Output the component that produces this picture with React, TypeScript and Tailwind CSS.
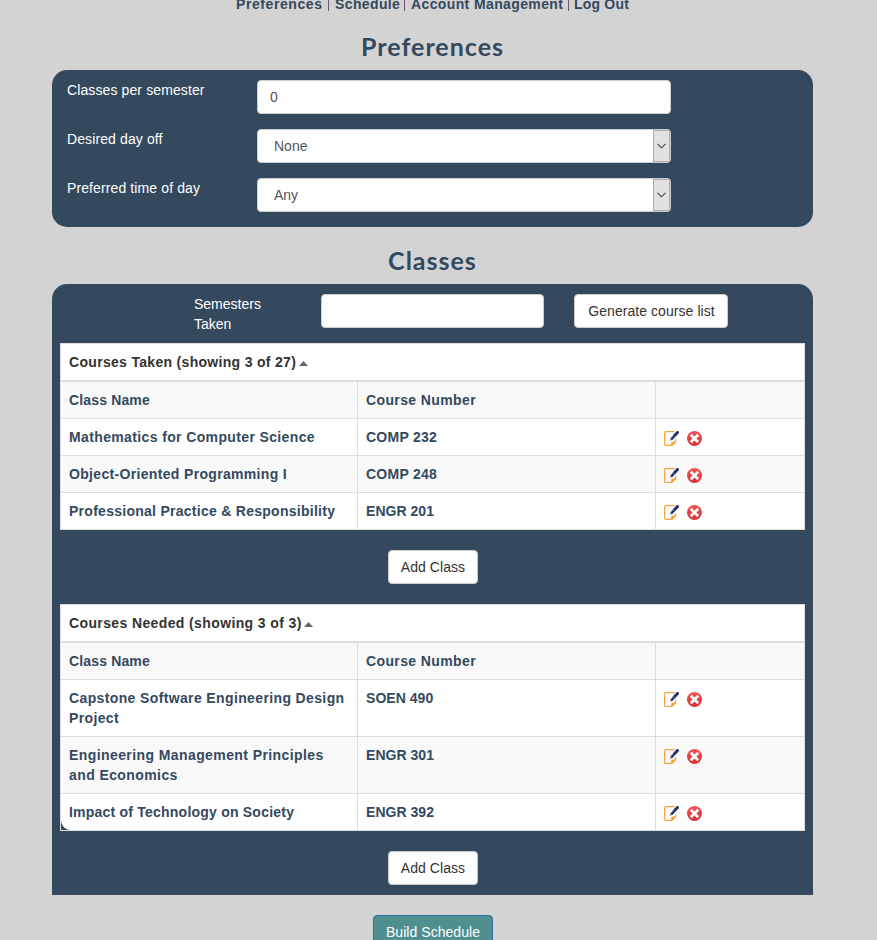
import type { ReactNode } from 'react';

type Course = { name: ReactNode; number: string; tall?: boolean; spacing: string };

const taken: Course[] = [
  { name: 'Mathematics for Computer Science', number: 'COMP 232', spacing: 'tracking-[0.37px]' },
  { name: 'Object-Oriented Programming I', number: 'COMP 248', spacing: 'tracking-[0.33px]' },
  { name: 'Professional Practice & Responsibility', number: 'ENGR 201', spacing: 'tracking-[0.27px]' },
];

const needed: Course[] = [
  { name: <>Capstone Software Engineering Design<br />Project</>, number: 'SOEN 490', tall: true, spacing: 'tracking-[0.37px]' },
  { name: <>Engineering Management Principles<br />and Economics</>, number: 'ENGR 301', tall: true, spacing: 'tracking-[0.41px]' },
  { name: 'Impact of Technology on Society', number: 'ENGR 392', spacing: 'tracking-[0.22px]' },
];

function EditIcon() {
  return (
    <svg width="15" height="15" viewBox="0 0 15 15" fill="none">
      <path d="M10.5.6H2Q.6.6.6 2v11Q.6 14.4 2 14.4h5.8l3.8-3.8V8.2" stroke="#f9a33a" strokeWidth="1.2" />
      <path d="M7.2 14.8v-3q0-1 1-1h1q1.4-.2 2.8-1.6v1.9L8.2 14.8z" fill="#f9a033" />
      <path d="M5.6 9.8 7 7.2l1.8 1.5z" fill="#59639b" />
      <path d="m7.4 8.2 3-3.2" stroke="#28306f" strokeWidth="2.5" />
      <path d="m10.4 4.7 3.1-3.2" stroke="#252d70" strokeWidth="3" strokeLinecap="round" />
      <path d="m9.2 4.3 2 1.8" stroke="#7981ad" strokeWidth=".6" />
    </svg>
  );
}

function DeleteIcon() {
  return (
    <svg width="15" height="15" viewBox="0 0 15 15" fill="none">
      <defs>
        <linearGradient id="red" x1="0" y1="0" x2="0" y2="1">
          <stop stopColor="#f25255" />
          <stop offset="1" stopColor="#d93139" />
        </linearGradient>
      </defs>
      <circle cx="7.5" cy="7.5" r="7.5" fill="url(#red)" />
      <path d="m3.8 3.8 7.4 7.4m0-7.4-7.4 7.4" stroke="#fff" strokeWidth="2.7" />
    </svg>
  );
}

function Row({ course, striped }: { course: Course; striped: boolean }) {
  return (
    <div className={`grid grid-cols-[297px_298px_148px] border-b border-[#ddd] ${course.tall ? 'h-[57px]' : 'h-[37px]'} ${striped ? 'bg-[#f9f9f9]' : 'bg-white'}`}>
      <div className={`border-r border-[#ddd] py-2 pl-2 whitespace-nowrap ${course.spacing}`}>{course.name}</div>
      <div className={`border-r border-[#ddd] py-2 pl-2 ${course.number.startsWith('COMP') ? 'tracking-[0.25px]' : 'tracking-[0.04px]'}`}>{course.number}</div>
      <div className="flex gap-2 pt-3 pl-2">
        <EditIcon />
        <DeleteIcon />
      </div>
    </div>
  );
}

function CourseTable({ title, spacing, courses }: { title: string; spacing: string; courses: Course[] }) {
  return (
    <div className="mx-2 border-x border-t border-[#ddd] font-bold text-[#34495e]">
      <div className={`flex h-[38px] border-b-2 border-[#ddd] bg-white py-2 pl-2 text-[#333] ${spacing}`}>
        {title}
        <svg className="mt-[9px] ml-[2.5px]" width="9" height="5" viewBox="0 0 9 5"><path d="M0 5 4.5 0 9 5z" fill="#666" /></svg>
      </div>
      <div className="grid h-[37px] grid-cols-[297px_298px_148px] border-b border-[#ddd] bg-[#f9f9f9]">
        <div className="border-r border-[#ddd] py-2 pl-2 tracking-[0.15px]">Class Name</div>
        <div className="border-r border-[#ddd] py-2 pl-2 tracking-[0.38px]">Course Number</div>
      </div>
      {courses.map((c, i) => <Row key={c.number} course={c} striped={i % 2 === 1} />)}
    </div>
  );
}

function Select({ value }: { value: string }) {
  return (
    <div className="flex h-[34px] w-[414px] items-center justify-between overflow-hidden rounded border border-[#ccc] bg-white pl-4 text-[#555]">
      <span>{value}</span>
      <span className="flex h-full w-[17px] items-center justify-center border border-[#adadad] bg-[#e1e1e1]">
        <svg className="mr-px" width="9" height="6" viewBox="0 0 9 6" fill="none"><path d="m.5.8 4 4 4-4" stroke="#444" strokeWidth="1.1" /></svg>
      </span>
    </div>
  );
}

function Field({ label, children }: { label: string; children: ReactNode }) {
  return (
    <div className="flex">
      <label className="w-[190px] tracking-[0.11px] text-white">{label}</label>
      {children}
    </div>
  );
}

function Divider() {
  return <span className="mt-[5px] mr-[6px] ml-[5px] mb-[3px] w-px bg-[#765078]" />;
}

const button = 'flex h-[34px] items-center justify-center rounded border border-[#ccc] bg-white pl-px tracking-[0.06px] text-[#333]';
const heading = "text-center font-['Lato',sans-serif] text-[25px] leading-[28px] font-bold tracking-[1px] text-[#34495e]";

export default function App() {
  return (
    <div className="h-[940px] overflow-hidden bg-[#d3d3d3] pl-[52px] font-['Liberation_Sans',Arial,sans-serif] text-sm leading-5">
      <div className="w-[761px]">
        <nav className="-mt-[6px] flex h-5 pl-[184px] font-bold whitespace-nowrap text-[#34495e]">
          <a className="w-[87px] tracking-[0.58px]">Preferences</a><Divider />
          <a className="w-[64px] tracking-[0.38px]">Schedule</a><Divider />
          <a className="w-[152px] tracking-[0.38px]">Account Management</a><Divider />
          <a className="-ml-px tracking-[0.2px]">Log Out</a>
        </nav>
        <h1 className={`${heading} mt-[18px] mb-[10px]`}>Preferences</h1>
        <section className="flex h-[157px] flex-col gap-[15px] rounded-[15px] bg-[#34495e] pt-[10px] pl-[15px]">
          <Field label="Classes per semester">
            <div className="flex h-[34px] w-[414px] items-center rounded border border-[#ccc] bg-white pl-3 text-[#555]">0</div>
          </Field>
          <Field label="Desired day off"><Select value="None" /></Field>
          <Field label="Preferred time of day"><Select value="Any" /></Field>
        </section>
        <h1 className={`${heading} mt-[19px] mb-[10px]`}>Classes</h1>
        <section className="h-[611px] rounded-t-[15px] bg-[#34495e] pt-[10px]">
          <div className="mb-[9px] flex h-10 pl-[142px]">
            <label className="w-[127px] text-white">Semesters<br />Taken</label>
            <div className="h-[34px] w-[223px] rounded border border-[#ccc] bg-white" />
            <div className={`${button} ml-[30px] w-[154px]`}>Generate course list</div>
          </div>
          <CourseTable title="Courses Taken (showing 3 of 27)" spacing="tracking-[0.31px]" courses={taken} />
          <div className={`${button} mx-auto mt-5 mb-5 w-[90px]`}>Add Class</div>
          <div className="relative">
            <CourseTable title="Courses Needed (showing 3 of 3)" spacing="tracking-[0.38px]" courses={needed} />
            <svg className="absolute bottom-px left-[9px]" width="8" height="9" viewBox="0 0 8 9"><path d="M0 0Q1 7 8 9H0z" fill="#34495e" /></svg>
          </div>
          <div className={`${button} mx-auto mt-5 w-[90px]`}>Add Class</div>
        </section>
        <div className="mx-auto mt-5 flex h-[34px] w-[120px] items-center justify-center rounded border border-[#2e6da4] bg-[#4f8f8f] pl-px tracking-[0.05px] text-white">Build Schedule</div>
      </div>
    </div>
  );
}
